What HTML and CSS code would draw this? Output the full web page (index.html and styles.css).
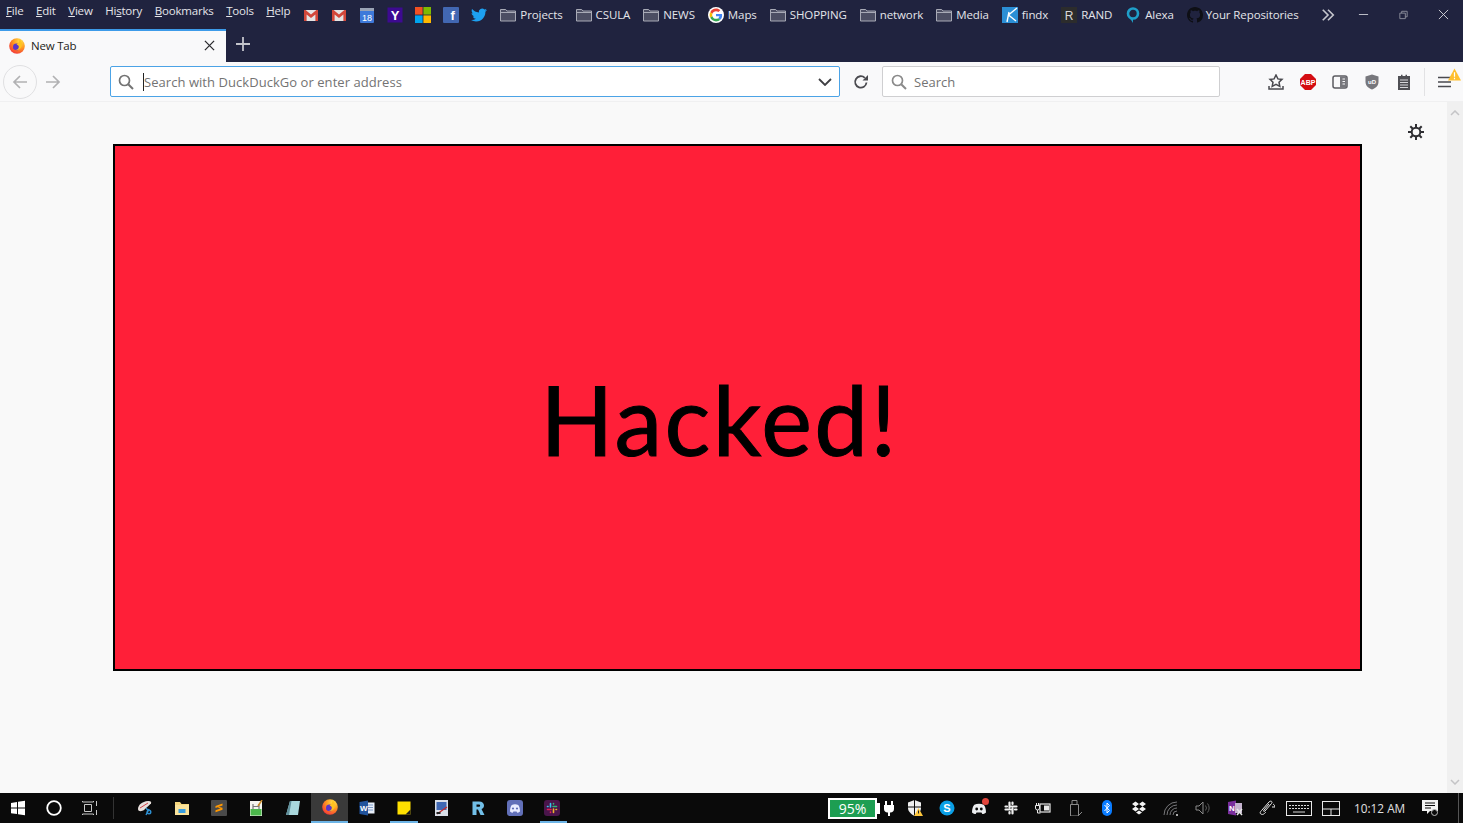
FILE: index.html
```html
<!DOCTYPE html>
<html lang="en">
<head>
  <meta charset="UTF-8" />
  <title>New Tab</title>
  <link rel="stylesheet" href="styles.css">
</head>
<body>

<svg class="defs" aria-hidden="true">
  <defs>
    <radialGradient id="foxfire" cx="0.7" cy="0.2" r="0.95">
      <stop offset="0" stop-color="#ffe14d"/>
      <stop offset="0.45" stop-color="#ff9a1f"/>
      <stop offset="1" stop-color="#f0243f"/>
    </radialGradient>
    <symbol id="firefox" viewBox="0 0 16 16">
      <circle cx="8" cy="8" r="7.8" fill="url(#foxfire)"/>
      <circle cx="7.4" cy="9" r="3.4" fill="#5a35c9"/>
      <path d="M10.5 1.2C13 3 13.6 6 12.6 8.6 11.6 11.4 8.6 12.8 6 12c2 .2 3.6-1.2 3.8-3 .1-1.3-1-2.3-2.3-2.2C9 5.6 10.6 3.8 10.5 1.2z" fill="#ffc21f"/>
      <path d="M1 6.5C2 10 5 12.4 8.6 12c-1.6 1.6-4.6 1.4-6-.4C1.2 10 .7 8.2 1 6.5z" fill="#ff5a2a"/>
    </symbol>
    <symbol id="gmail" viewBox="0 0 16 16">
      <rect x="1" y="3" width="14" height="11" fill="#e4e4e4"/>
      <path d="M1 3h1.6L8 7.4 13.4 3H15v11h-2.6V7.6L8 11 3.6 7.6V14H1z" fill="#d2473a"/>
    </symbol>
    <symbol id="folder" viewBox="0 0 16 16">
      <path d="M.5 2.5h5.2l1.3 1.5h8.500v10H.5z" fill="#4c4e63" stroke="#a8aab6"/>
      <path d="M.5 5.500h15" stroke="#a8aab6"/>
    </symbol>
  </defs>
</svg>

<header class="chrome">
  <div class="top-row">
    <nav class="menu">
      <span><u>F</u>ile</span>
      <span><u>E</u>dit</span>
      <span><u>V</u>iew</span>
      <span>Hi<u>s</u>tory</span>
      <span><u>B</u>ookmarks</span>
      <span><u>T</u>ools</span>
      <span><u>H</u>elp</span>
    </nav>
    <div class="bookmarks">
      <svg class="ico"><use href="#gmail"/></svg>
      <svg class="ico"><use href="#gmail"/></svg>
      <svg class="ico" viewBox="0 0 16 16">
        <rect x="1" y="1" width="14" height="15" rx="1" fill="#3e79da"/>
        <rect x="1" y="1" width="14" height="3" fill="#9aa3b5"/>
        <text x="8" y="13.500" text-anchor="middle" class="svg-txt cal">18</text>
      </svg>
      <svg class="ico" viewBox="0 0 16 16">
        <rect x="0.500" y="0.500" width="15" height="15" fill="#3d0a91"/>
        <text x="8" y="13" text-anchor="middle" class="svg-txt yah">Y</text>
      </svg>
      <svg class="ico" viewBox="0 0 16 16">
        <rect x="0" y="0" width="7.600" height="7.600" fill="#f25022"/>
        <rect x="8.400" y="0" width="7.600" height="7.600" fill="#7fba00"/>
        <rect x="0" y="8.400" width="7.600" height="7.600" fill="#00a4ef"/>
        <rect x="8.400" y="8.400" width="7.600" height="7.600" fill="#ffb900"/>
      </svg>
      <svg class="ico" viewBox="0 0 16 16">
        <rect x="0" y="0" width="16" height="16" rx="1" fill="#4267b2"/>
        <text x="9.500" y="13" text-anchor="middle" class="svg-txt fb">f</text>
      </svg>
      <svg class="ico" viewBox="0 0 24 24">
        <path fill="#1da1f2" d="M23.950 4.570a10 10 0 0 1-2.820.77 4.960 4.960 0 0 0 2.160-2.720c-.95.55-2 .96-3.120 1.180a4.920 4.920 0 0 0-8.380 4.480C7.690 8.100 4.070 6.130 1.640 3.160a4.820 4.820 0 0 0-.67 2.480c0 1.700.87 3.200 2.190 4.080a4.900 4.900 0 0 1-2.230-.61v.06c0 2.380 1.700 4.370 3.950 4.820a4.900 4.900 0 0 1-2.210.08 4.940 4.940 0 0 0 4.600 3.420A9.870 9.870 0 0 1 0 19.540a14 14 0 0 0 7.560 2.210c9.050 0 14-7.500 14-13.980 0-.21 0-.42-.02-.63a9.940 9.940 0 0 0 2.410-2.570z"/>
      </svg>
      <a class="bm"><svg class="ico"><use href="#folder"/></svg>Projects</a>
      <a class="bm"><svg class="ico"><use href="#folder"/></svg>CSULA</a>
      <a class="bm"><svg class="ico"><use href="#folder"/></svg>NEWS</a>
      <a class="bm">
        <svg class="ico" viewBox="-6 -6 60 60">
          <circle cx="24" cy="24" r="30" fill="#fff"/>
          <path fill="#EA4335" d="M24 9.500c3.540 0 6.710 1.220 9.210 3.600l6.850-6.850C35.900 2.380 30.470 0 24 0 14.620 0 6.510 5.380 2.560 13.220l7.980 6.190C12.430 13.720 17.740 9.500 24 9.500z"/>
          <path fill="#4285F4" d="M46.980 24.550c0-1.570-.15-3.090-.38-4.550H24v9.020h12.940c-.58 2.960-2.260 5.480-4.780 7.180l7.730 6c4.510-4.180 7.090-10.360 7.090-17.650z"/>
          <path fill="#FBBC05" d="M10.530 28.590c-.48-1.450-.76-2.990-.76-4.590s.27-3.140.76-4.590l-7.980-6.190C.92 16.460 0 20.120 0 24c0 3.880.92 7.540 2.560 10.780l7.970-6.190z"/>
          <path fill="#34A853" d="M24 48c6.480 0 11.930-2.130 15.890-5.810l-7.730-6c-2.150 1.450-4.920 2.300-8.160 2.300-6.260 0-11.570-4.220-13.470-9.910l-7.980 6.190C6.510 42.620 14.620 48 24 48z"/>
        </svg>Maps</a>
      <a class="bm"><svg class="ico"><use href="#folder"/></svg>SHOPPING</a>
      <a class="bm"><svg class="ico"><use href="#folder"/></svg>network</a>
      <a class="bm"><svg class="ico"><use href="#folder"/></svg>Media</a>
      <a class="bm">
        <svg class="ico" viewBox="0 0 16 16">
          <rect width="16" height="16" fill="#2b8fd6"/>
          <path d="M5 15 7 5M15 1 6.500 8 14 14" fill="none" stroke="#fff" stroke-width="1.400"/>
        </svg>findx</a>
      <a class="bm">
        <svg class="ico" viewBox="0 0 16 16">
          <rect width="16" height="16" fill="#2c2c2c"/>
          <text x="8" y="12.500" text-anchor="middle" class="svg-txt rnd">R</text>
        </svg>RAND</a>
      <a class="bm">
        <svg class="ico" viewBox="0 0 16 16">
          <circle cx="8" cy="6.500" r="5" fill="none" stroke="#1f9fc9" stroke-width="2.600"/>
          <path d="M4.500 10.500 8 16v-4.500z" fill="#1f9fc9"/>
        </svg>Alexa</a>
      <a class="bm bm-tight">
        <svg class="ico" viewBox="0 0 16 16">
          <path fill="#0e0f15" d="M8 0C3.580 0 0 3.580 0 8c0 3.540 2.290 6.530 5.470 7.590.4.070.55-.17.55-.38 0-.19-.01-.82-.01-1.490-2.010.37-2.530-.49-2.690-.94-.09-.23-.48-.94-.82-1.130-.28-.15-.68-.52-.01-.53.63-.01 1.080.58 1.230.82.720 1.210 1.870.87 2.330.66.070-.52.28-.87.51-1.070-1.780-.2-3.640-.89-3.640-3.950 0-.87.31-1.590.82-2.150-.08-.2-.36-1.020.08-2.120 0 0 .67-.21 2.200.82.64-.18 1.320-.27 2-.27.68 0 1.360.09 2 .27 1.530-1.040 2.200-.82 2.200-.82.44 1.100.16 1.920.08 2.120.51.56.82 1.270.82 2.150 0 3.070-1.870 3.750-3.650 3.950.29.25.54.73.54 1.480 0 1.070-.01 1.930-.01 2.200 0 .21.15.46.55.38A8.013 8.013 0 0 0 16 8c0-4.420-3.580-8-8-8z"/>
        </svg>Your Repositories</a>
      <svg class="ico more" viewBox="0 0 16 16">
        <path d="M2 2l6 6-6 6M8 2l6 6-6 6" fill="none" stroke="#c4c5cc" stroke-width="1.900"/>
      </svg>
    </div>
    <div class="win-btns">
      <svg class="win-ico" viewBox="0 0 12 12"><path d="M1 6h10" stroke="#c9cad2"/></svg>
      <svg class="win-ico" viewBox="0 0 12 12"><path d="M2 4.500h6v6H2zM4 4.500v-2h6v6H8" fill="none" stroke="#8e909e"/></svg>
      <svg class="win-ico" viewBox="0 0 12 12"><path d="M1 1l10 10M11 1 1 11" stroke="#d6d7dd"/></svg>
    </div>
  </div>

  <div class="tab-row">
    <div class="tab">
      <svg class="ico"><use href="#firefox"/></svg>
      <span class="tab-title">New Tab</span>
      <svg class="tab-x" viewBox="0 0 12 12"><path d="M1 1l10 10M11 1 1 11" stroke="#2a2a2e" stroke-width="1.400"/></svg>
    </div>
    <svg class="plus" viewBox="0 0 14 14"><path d="M7 0v14M0 7h14" stroke="#c3c4cb" stroke-width="1.800"/></svg>
  </div>

  <div class="toolbar">
    <div class="back">
      <svg class="ico" viewBox="0 0 16 16"><path d="M15 8H2M8 2 2 8l6 6" fill="none" stroke="#b1b1b3" stroke-width="1.700"/></svg>
    </div>
    <svg class="ico fwd" viewBox="0 0 16 16"><path d="M1 8h13M8 2l6 6-6 6" fill="none" stroke="#b1b1b3" stroke-width="1.700"/></svg>
    <div class="urlbar">
      <svg class="ico" viewBox="0 0 16 16"><circle cx="6.500" cy="6.500" r="5" fill="none" stroke="#737373" stroke-width="1.700"/><path d="M10.200 10.200 15 15" stroke="#737373" stroke-width="2"/></svg>
      <span class="url-text">Search with DuckDuckGo or enter address</span>
      <svg class="drop" viewBox="0 0 14 8"><path d="M1 1l6 6 6-6" fill="none" stroke="#3f3f43" stroke-width="1.800"/></svg>
    </div>
    <svg class="ico reload" viewBox="0 0 16 16"><path d="M13.500 8.500A5.700 5.700 0 1 1 11.800 3.800" fill="none" stroke="#4a4a4f" stroke-width="1.800"/><path d="M15 1v5.500H9.500z" fill="#4a4a4f"/></svg>
    <div class="searchbar">
      <svg class="ico" viewBox="0 0 16 16"><circle cx="6.500" cy="6.500" r="5" fill="none" stroke="#8a8a8a" stroke-width="1.700"/><path d="M10.200 10.200 15 15" stroke="#8a8a8a" stroke-width="2"/></svg>
      <span class="search-text">Search</span>
    </div>
    <div class="tools">
      <svg class="ico" viewBox="0 0 16 16"><path d="M8 1l1.900 3.900 4.100.5-3 2.800.8 4.100L8 10.300 4.200 12.300 5 8.200 2 5.400l4.100-.5z" fill="none" stroke="#4a4a4f" stroke-width="1.500"/><path d="M1 12v3h14v-3" fill="none" stroke="#4a4a4f" stroke-width="1.500"/></svg>
      <svg class="ico" viewBox="0 0 16 16">
        <path d="M5 0h6l5 5v6l-5 5H5l-5-5V5z" fill="#d40d12"/>
        <text x="8" y="10.800" text-anchor="middle" class="svg-txt abp">ABP</text>
      </svg>
      <svg class="ico" viewBox="0 0 16 16"><rect x="1" y="2" width="14" height="12" rx="2" fill="none" stroke="#5b5b60" stroke-width="1.500"/><rect x="8" y="2.500" width="6.500" height="11" fill="#77777c"/><path d="M10.500 5h2.500M10.500 7.500h2.500M10.500 10h2.500" stroke="#f9f9fa"/></svg>
      <svg class="ico" viewBox="0 0 16 16">
        <path d="M8 .5 14.500 2.500V8c0 3.800-3 6.300-6.500 7.500C4.500 14.300 1.500 11.800 1.500 8V2.500z" fill="#77777c"/>
        <text x="8" y="10" text-anchor="middle" class="svg-txt ublock">uD</text>
      </svg>
      <svg class="ico" viewBox="0 0 16 16"><path d="M2 2h3V.8h1.500V2h3V.8H11V2h3v14H2z" fill="#4f4f54"/><path d="M4 6h8M4 8.500h8M4 11h8M4 13.500h8" stroke="#d7d7db"/></svg>
      <span class="tool-sep"></span>
      <div class="burger">
        <svg class="ico" viewBox="0 0 16 16"><path d="M1 3.500h13M1 8h13M1 12.500h13" stroke="#4a4a4f" stroke-width="1.600"/></svg>
        <svg class="warn" viewBox="0 0 14 13">
          <path d="M7 0l7 13H0z" fill="#ffbf2e"/>
          <path d="M7 4v5M7 10v1.500" stroke="#fff" stroke-width="1.300"/>
        </svg>
      </div>
    </div>
  </div>
</header>

<main class="page">
  <div class="content">
    <div class="gear-row">
      <svg class="gear" viewBox="0 0 16 16">
        <circle cx="8" cy="8" r="4.300" fill="none" stroke="#2f2f33" stroke-width="2"/>
        <path d="M8 0v3.500M8 12.500V16M0 8h3.500M12.500 8H16M2.300 2.300l2.500 2.500M11.200 11.200l2.500 2.500M13.700 2.300l-2.500 2.500M4.800 11.200l-2.500 2.500" stroke="#2f2f33" stroke-width="2"/>
      </svg>
    </div>
    <section class="panel">
      <h1 class="hacked">Hacked!</h1>
    </section>
  </div>
  <aside class="scrollbar">
    <svg class="scroll-arrow" viewBox="0 0 10 6"><path d="M1 5l4-4 4 4" fill="none" stroke="#c4c4c6" stroke-width="1.500"/></svg>
    <svg class="scroll-arrow" viewBox="0 0 10 6"><path d="M1 1l4 4 4-4" fill="none" stroke="#c4c4c6" stroke-width="1.500"/></svg>
  </aside>
</main>

<footer class="taskbar">
  <div class="task-left">
    <div class="sys-btn">
      <svg class="ico" viewBox="0 0 16 16"><path d="M1 2.900 7 2v5.600H1zM8 1.800 15 .8v6.800H8zM1 8.500h6v5.600l-6-.9zM8 8.500h7v6.800l-7-1z" fill="#fff"/></svg>
    </div>
    <div class="sys-btn">
      <svg class="ico" viewBox="0 0 16 16"><circle cx="8" cy="8" r="6.800" fill="none" stroke="#fff" stroke-width="1.800"/></svg>
    </div>
    <div class="sys-btn">
      <svg class="ico" viewBox="0 0 16 16"><path d="M.5 1v1h11V1M2.500 4.500h7v7h-7zM.5 15v-1h11v1M14.500 1v5M14.500 10v5" fill="none" stroke="#c8c8c8"/></svg>
    </div>
    <span class="task-sep"></span>
    <div class="app">
      <svg class="ico" viewBox="0 0 16 16"><path d="M1 9C1 5 5 1.500 11 1c3-.2 3.500 1 3 2.500L7 10c-2 1.500-6 2-6-1z" fill="#e8e0dc"/><path d="M3 8 11 3" stroke="#d2444a"/><circle cx="12" cy="12" r="1.800" fill="none" stroke="#2e8fd0" stroke-width="1.400"/><path d="M9 8l2.500 3M12 9l-3 6" stroke="#2e8fd0" stroke-width="1.400"/></svg>
    </div>
    <div class="app">
      <svg class="ico" viewBox="0 0 16 16"><path d="M1 2h5l1.500 2H15v11H1z" fill="#f6d77d"/><rect x="1" y="5" width="14" height="10" fill="#fbe39b"/><rect x="4.500" y="9" width="7" height="4" fill="#3a9ee0"/></svg>
    </div>
    <div class="app">
      <svg class="ico" viewBox="0 0 16 16"><rect width="16" height="16" rx="1" fill="#4a4a4a"/><path d="M11.500 3.500 4.500 6v2l7-2.400zM11.500 7.800l-7 2.400v2l7-2.400zM4.500 6l7 3.800V7.800L4.500 6z" fill="#ff9800"/></svg>
    </div>
    <div class="app">
      <svg class="ico" viewBox="0 0 16 16"><rect x="2" y="1" width="12" height="15" fill="#f4f4ee"/><rect x="2.500" y="9" width="11" height="6.500" fill="#4cb84c"/><path d="M5 4v5M5 6.500h6M11 4v5" stroke="#777" stroke-width="1.200"/><path d="M10 6 14 0" stroke="#c98a2a" stroke-width="1.500"/></svg>
    </div>
    <div class="app">
      <svg class="ico" viewBox="0 0 16 16"><path d="M5 1h10l-2 14H1z" fill="#a9d8dd"/><path d="M5 1 1 15h3L6.500 1z" fill="#5f8e9a"/></svg>
    </div>
    <div class="app app-active">
      <svg class="ico"><use href="#firefox"/></svg>
    </div>
    <div class="app">
      <svg class="ico" viewBox="0 0 16 16"><rect x="7" y="2.500" width="8.500" height="11" fill="#e8eef8"/><path d="M9 5h5M9 7.500h5M9 10h5" stroke="#7d9bc9"/><path d="M.5 2 9 .5v15L.5 14z" fill="#21539c"/><text x="4.700" y="11" text-anchor="middle" class="svg-txt wrd">W</text></svg>
    </div>
    <div class="app app-open-sticky">
      <svg class="ico" viewBox="0 0 16 16"><rect x="1.500" y="1.500" width="13" height="13" fill="#ffe000"/><path d="M14.500 14.500H9.500L14.500 9.500z" fill="#1c1c1c"/></svg>
    </div>
    <div class="app">
      <svg class="ico" viewBox="0 0 16 16"><rect x="2" y="0" width="13" height="16" fill="#d9dfe8"/><rect x="3.500" y="2" width="10" height="8" fill="#3f68b4"/><path d="M4 14 14 7" stroke="#c8282a" stroke-width="1.200"/><rect x="3.500" y="12" width="4" height="2" fill="#222"/></svg>
    </div>
    <div class="app">
      <svg class="ico" viewBox="0 0 16 16"><path d="M2.500 15V1.500H9c3.500 0 5 1.800 5 4 0 1.700-.9 3-2.500 3.600L14.500 15h-4L8 9.500H6.500V15z" fill="#72bfe8"/><path d="M6.500 4.500v2.300H9c1.500 0 1.500-2.300 0-2.300z" fill="#0a0a0a"/></svg>
    </div>
    <div class="app">
      <svg class="ico" viewBox="0 0 16 16"><rect width="16" height="16" rx="3" fill="#6270b8"/><path d="M3 11.500c0-3 .8-5.500 1.800-6.500 2-.9 4.400-.9 6.400 0 1 1 1.800 3.500 1.800 6.500-1 .8-2 1.200-2.800 1.200L9.600 11.500H6.400l-.6 1.200c-.8 0-1.800-.4-2.800-1.200z" fill="#e9ecff"/><circle cx="6" cy="8.500" r="1.100" fill="#6270b8"/><circle cx="10" cy="8.500" r="1.100" fill="#6270b8"/></svg>
    </div>
    <div class="app app-open-slack">
      <svg class="ico" viewBox="0 0 16 16"><rect width="16" height="16" rx="3" fill="#4a154b"/><g fill="none" stroke-width="1.600" stroke-linecap="round"><path d="M6.500 7V3.500M3.500 6.500H4" stroke="#36c5f0"/><path d="M9 6.500h3.500M9.500 3.500V4" stroke="#2eb67d"/><path d="M9.500 9v3.500M12.500 9.500H12" stroke="#ecb22e"/><path d="M7 9.500H3.500M6.500 12.500V12" stroke="#e01e5a"/></g></svg>
    </div>
  </div>

  <div class="task-right">
    <div class="battery"><span class="battery-box">95%</span><span class="battery-nub"></span></div>
    <div class="tray">
      <svg class="ico plug" viewBox="0 0 16 16"><path d="M5 1v4M11 1v4" stroke="#fff" stroke-width="2"/><path d="M3 5h10v4c0 2-1.500 3.500-3.500 3.500H9V16H7v-3.500h-.5C4.500 12.500 3 11 3 9z" fill="#fff"/></svg>
      <svg class="ico" viewBox="0 0 16 16"><path d="M7.500 0 14 2.500V8c0 3.500-3 6-6.500 8C4 14 1 11.500 1 8V2.500z" fill="#f0f0f0"/><path d="M7.500 0v16M1 7h13" stroke="#0a0a0a"/><path d="M11.500 8 16 16H7z" fill="#ffc83d"/><path d="M11.500 10.500v3" stroke="#222"/></svg>
      <svg class="ico" viewBox="0 0 16 16"><circle cx="8" cy="8" r="7.500" fill="#0a9fe6"/><text x="8" y="12" text-anchor="middle" class="svg-txt skp">S</text></svg>
      <div class="discord">
        <svg class="ico" viewBox="0 0 16 16"><path d="M1 12.500c0-3.500 1-6.500 2.300-7.800 2.800-1.200 6.600-1.200 9.400 0 1.300 1.300 2.300 4.300 2.300 7.800-1.300 1-2.700 1.500-3.700 1.500l-.8-1.500H5.500L4.700 14c-1 0-2.400-.5-3.700-1.500z" fill="#eceef0"/><circle cx="5.700" cy="9" r="1.400" fill="#0a0a0a"/><circle cx="10.300" cy="9" r="1.400" fill="#0a0a0a"/></svg>
        <span class="badge"></span>
      </div>
      <svg class="ico" viewBox="0 0 16 16"><path d="M6.500 7.500V2.500M8.500 6.500h5M9.500 8.500v5M7.500 9.500h-5M2.500 6.500H4M9.500 2.500V4M13.500 9.500H12M6.500 13.500V12" fill="none" stroke="#f0f0f0" stroke-width="2.200" stroke-linecap="round"/></svg>
      <svg class="ico" viewBox="0 0 16 16"><rect x="5" y="4" width="10" height="8" fill="none" stroke="#e8e8e8" stroke-width="1.200"/><rect x="9" y="5.500" width="5" height="5" fill="#e8e8e8"/><path d="M.5 5.500h4v2.500a2 2 0 0 1-4 0zM1.500 3v2.500M3.500 3v2.500M2.500 10v3h3" fill="none" stroke="#e8e8e8"/></svg>
      <svg class="ico" viewBox="0 0 16 16"><path d="M3.500 4.500h8V16h-8zM5 .5h5v4H5z" fill="none" stroke="#8a8a8a"/><path d="M12 15l3-3" stroke="#8a8a8a"/></svg>
      <svg class="ico" viewBox="0 0 16 16"><rect x="3" y="0" width="10" height="16" rx="5" fill="#0a7cff"/><path d="M5.500 5 10.500 10.500 8 13V3l2.500 2.500L5.500 11" fill="none" stroke="#fff"/></svg>
      <svg class="ico" viewBox="0 0 16 16"><path d="M4.500 1.500 8 4 4.500 6.500 1 4zM11.500 1.500 15 4l-3.500 2.500L8 4zM4.500 6.500 8 9 4.500 11.500 1 9zM11.500 6.500 15 9l-3.500 2.500L8 9zM5 12.500 8 10.500l3 2-3 2z" fill="#f4f4f4"/></svg>
      <svg class="ico" viewBox="0 0 16 16"><path d="M1 15a13 13 0 0 1 13-13M4 15A10 10 0 0 1 14 5M7 15a7 7 0 0 1 7-7M10 15a4 4 0 0 1 4-4" fill="none" stroke="#77777a"/><circle cx="14" cy="15" r="1" fill="#e0e0e0"/></svg>
      <svg class="ico" viewBox="0 0 16 16"><path d="M1 6h3l4-4v12l-4-4H1z" fill="none" stroke="#8a8a8a"/><path d="M10.500 5.500a4 4 0 0 1 0 5M12.500 3.500a7 7 0 0 1 0 9" fill="none" stroke="#5d5d5d"/></svg>
      <svg class="ico" viewBox="0 0 16 16"><path d="M1 2 9 .5v15L1 14z" fill="#7a2e9c"/><rect x="8" y="3" width="7" height="10" fill="#c5b3cf"/><text x="5" y="11" text-anchor="middle" class="svg-txt onn">N</text><path d="M10 9l5 6M15 9l-5 6" stroke="#e8e8e8" stroke-width="1.500"/></svg>
      <svg class="ico" viewBox="0 0 16 16"><path d="M2 14c-2-1 0-3 1-4l7-8c2-2 4 0 2.500 1.500L6 11c-1 1-2 0-1-1l5-6M2 14c2 1.500 4-1 5-2M13 7h3M14 4c1 .5 2 1.500 2 3" fill="none" stroke="#e8e8e8"/></svg>
    </div>
    <svg class="kbd" viewBox="0 0 26 15">
      <rect x="0.500" y="0.500" width="25" height="14" fill="none" stroke="#e8e8e8"/>
      <path d="M3 4.500h20M3 7.500h20" stroke="#d8d8d8" stroke-dasharray="2 1"/>
      <path d="M7 11h12" stroke="#d8d8d8"/>
    </svg>
    <svg class="tablet" viewBox="0 0 18 15">
      <rect x="0.500" y="0.500" width="17" height="14" fill="none" stroke="#e8e8e8"/>
      <path d="M.5 8h17M9 8v6.500" stroke="#e8e8e8"/>
    </svg>
    <span class="clock">10:12 AM</span>
    <div class="notify">
      <svg class="ico" viewBox="0 0 16 16"><path d="M0 0h16v11H8l-3 3v-3H0z" fill="#f4f4f4"/><path d="M3 3h10M3 5.500h10M3 8h6" stroke="#0a0a0a"/><circle cx="12.500" cy="12.500" r="3" fill="#0a0a0a" stroke="#bbb"/></svg>
    </div>
    <span class="show-desktop"></span>
  </div>
</footer>

</body>
</html>
```

FILE: styles.css
```css
* {
  box-sizing: border-box;
}
html, body {
  height: 100%;
}
body {
  margin: 0;
  display: flex;
  flex-direction: column;
  overflow: hidden;
  font-family: "Open Sans", "Noto Sans", sans-serif;
  background-color: #f9f9f9;
}
svg {
  display: block;
  flex: none;
}
.defs {
  width: 0;
  height: 0;
}
.ico {
  width: 16px;
  height: 16px;
}

/* svg text labels */
.svg-txt {
  font-family: "Liberation Sans", sans-serif;
  fill: #fff;
}
.cal { font-size: 9px; }
.yah { font-size: 13px; font-weight: bold; }
.fb { font-size: 13px; font-weight: bold; }
.rnd { font-size: 12px; fill: #d8d8d8; }
.abp { font-size: 7px; font-weight: bold; }
.ublock { font-size: 6px; font-weight: bold; }
.wrd { font-size: 8px; font-weight: bold; }
.skp { font-size: 11px; font-weight: bold; }
.onn { font-size: 8px; font-weight: bold; }

/* title bar */
.chrome {
  flex: none;
  background-color: #20233f;
}
.top-row {
  height: 29px;
  display: flex;
  align-items: center;
  font-size: 11.500px;
  color: #e4e5ea;
}
.menu {
  display: flex;
  gap: 12.600px;
  padding-left: 6px;
  align-self: flex-start;
  line-height: 21px;
  letter-spacing: -0.2px;
}
.bookmarks {
  display: flex;
  align-items: center;
  gap: 12px;
  margin-left: 13px;
  letter-spacing: -0.1px;
}
.bm {
  display: flex;
  align-items: center;
  gap: 4px;
  margin-left: 1px;
  white-space: nowrap;
}
.bm-tight {
  gap: 3px;
}
.more {
  margin-left: 10px;
  width: 14px;
  height: 14px;
}
.win-btns {
  margin-left: auto;
  display: flex;
}
.win-btns .win-ico {
  margin: 0 14.500px;
}
.win-ico {
  width: 11px;
  height: 11px;
}

/* tabs */
.tab-row {
  height: 33px;
  display: flex;
  align-items: center;
}
.tab {
  width: 226px;
  height: 33px;
  display: flex;
  align-items: center;
  padding: 0 11px 2px 9px;
  background-color: #f9f9fa;
  border-top: 2px solid #3d9be9;
}
.tab-title {
  margin-left: 6px;
  font-size: 11.500px;
  letter-spacing: -0.2px;
  color: #1d1d20;
}
.tab-x {
  margin-left: auto;
  width: 11px;
  height: 11px;
}
.plus {
  margin-left: 10px;
  margin-bottom: 3px;
  width: 14px;
  height: 14px;
}

/* toolbar */
.toolbar {
  height: 40px;
  display: flex;
  align-items: center;
  padding-left: 3px;
  background-color: #f9f9fa;
  border-bottom: 1px solid #f0f0f1;
}
.back {
  width: 34px;
  height: 34px;
  display: flex;
  align-items: center;
  justify-content: center;
  border: 1px solid #e0e0e2;
  border-radius: 50%;
}
.fwd {
  margin-left: 8px;
}
.urlbar, .searchbar {
  height: 31px;
  display: flex;
  align-items: center;
  background-color: #fff;
  border-radius: 2px;
  font-size: 13px;
}
.urlbar {
  width: 730px;
  margin-left: 49px;
  padding: 0 7px;
  border: 1px solid #4ba3e6;
}
.url-text {
  margin-left: 9px;
  padding-top: 1px;
  border-left: 1px solid #222;
  color: #737373;
  line-height: 17px;
  letter-spacing: 0.05px;
}
.drop {
  margin-left: auto;
  width: 14px;
  height: 8px;
}
.reload {
  margin-left: 13px;
}
.searchbar {
  width: 338px;
  margin-left: 13px;
  padding: 0 8px;
  border: 1px solid #cfcfd1;
}
.search-text {
  margin-left: 7px;
  color: #737373;
}
.tools {
  display: flex;
  align-items: center;
  gap: 16px;
  margin-left: 48px;
}
.tool-sep {
  width: 1px;
  height: 28px;
  margin-left: -4px;
  margin-right: -4px;
  background-color: #e2e2e4;
}
.burger {
  position: relative;
}
.warn {
  position: absolute;
  top: -6px;
  left: 11px;
  width: 13px;
  height: 13px;
}

/* page */
.page {
  flex: 1;
  min-height: 0;
  display: flex;
}
.content {
  flex: 1;
  background-color: #f9f9f9;
}
.gear-row {
  height: 42px;
  display: flex;
  justify-content: flex-end;
  padding: 22px 23px 0 0;
}
.gear {
  width: 16px;
  height: 16px;
}
.panel {
  width: 1249px;
  height: 527px;
  margin-left: 113px;
  padding: 22px 36px 0 0;
  display: flex;
  align-items: center;
  justify-content: center;
  background-color: #ff1f38;
  border: 2px solid #000;
}
.hacked {
  margin: 0;
  font-family: Lato, "Open Sans", sans-serif;
  font-size: 96px;
  font-weight: normal;
  letter-spacing: 2.400px;
  -webkit-text-stroke: 1px #000;
  color: #000;
}
.scrollbar {
  width: 16px;
  display: flex;
  flex-direction: column;
  justify-content: space-between;
  align-items: center;
  padding: 8px 0;
  background-color: #f0f0f0;
}
.scroll-arrow {
  width: 10px;
  height: 6px;
}

/* taskbar */
.taskbar {
  flex: none;
  height: 30px;
  display: flex;
  justify-content: space-between;
  background-color: #0a0a0a;
  color: #e0e0e0;
}
.task-left, .task-right, .tray {
  display: flex;
  align-items: center;
}
.sys-btn {
  width: 36px;
  display: flex;
  justify-content: center;
}
.task-sep {
  width: 18px;
  height: 22px;
  background: linear-gradient(#333, #333) 5px 0 / 1px 100% no-repeat;
}
.app {
  width: 37px;
  height: 30px;
  display: flex;
  align-items: center;
  justify-content: center;
}
.app-active {
  background-color: #3a3a3a;
  border-bottom: 2px solid #6cb4e6;
}
.app-open-sticky {
  background: linear-gradient(#6cb4e6, #6cb4e6) center bottom / 28px 2px no-repeat;
}
.app-open-slack {
  background: linear-gradient(#6cb4e6, #6cb4e6) right 3px bottom / 27px 2px no-repeat;
}
.battery {
  display: flex;
  align-items: center;
  margin-right: 1px;
}
.battery-box {
  width: 49px;
  height: 21px;
  border: 2px solid #fff;
  background-color: #1d9e52;
  color: #fff;
  font-size: 14px;
  line-height: 17px;
  text-align: center;
}
.battery-nub {
  width: 3px;
  height: 11px;
  background-color: #fff;
}
.tray {
  gap: 16px;
}
.plug {
  margin-right: -6px;
}
.discord {
  position: relative;
}
.badge {
  position: absolute;
  top: -2px;
  right: -2px;
  width: 7px;
  height: 7px;
  border-radius: 50%;
  background-color: #e2453c;
}
.kbd {
  width: 26px;
  height: 15px;
  margin-left: 11px;
}
.tablet {
  width: 18px;
  height: 15px;
  margin-left: 10px;
}
.clock {
  margin-left: 14px;
  width: 50px;
  font-size: 11.800px;
  white-space: nowrap;
}
.notify {
  margin-left: 18px;
  width: 16px;
}
.show-desktop {
  width: 1px;
  height: 30px;
  margin-left: 20px;
  margin-right: 4px;
  background-color: #555;
}
```
